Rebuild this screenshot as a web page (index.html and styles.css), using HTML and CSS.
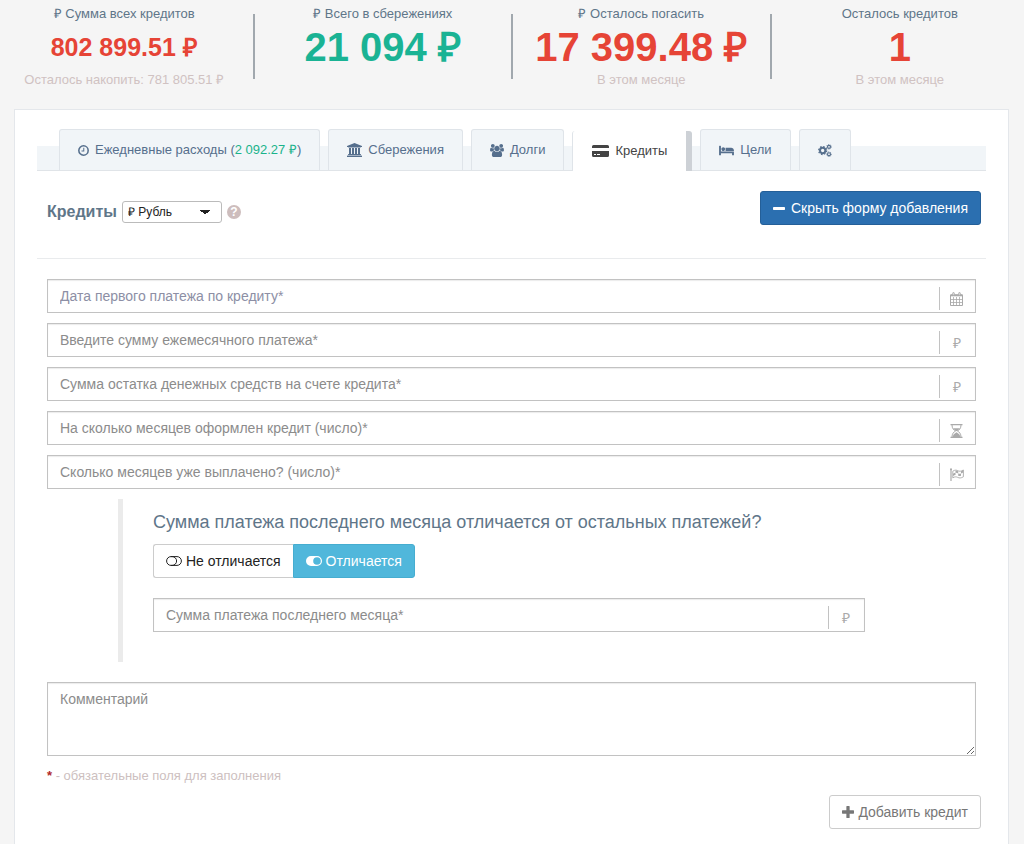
FILE: index.html
```html
<!DOCTYPE html>
<html lang="ru">
<head>
<meta charset="utf-8">
<meta name="viewport" content="width=device-width, initial-scale=1">
<title>Кредиты</title>
<link rel="stylesheet" href="styles.css">
</head>
<body>
<header class="stats">
  <div class="stat">
    <div class="stat-label">₽ Сумма всех кредитов</div>
    <div class="stat-value stat-value-small">802 899.51 ₽</div>
    <div class="stat-note">Осталось накопить: 781 805.51 ₽</div>
  </div>
  <div class="stat">
    <div class="stat-label">₽ Всего в сбережениях</div>
    <div class="stat-value stat-value-good">21 094 ₽</div>
  </div>
  <div class="stat">
    <div class="stat-label">₽ Осталось погасить</div>
    <div class="stat-value">17 399.48 ₽</div>
    <div class="stat-note">В этом месяце</div>
  </div>
  <div class="stat">
    <div class="stat-label">Осталось кредитов</div>
    <div class="stat-value">1</div>
    <div class="stat-note">В этом месяце</div>
  </div>
</header>

<main class="panel">
  <nav class="tabs">
    <a class="tab" href="#daily">
      <svg class="icon" width="11" height="11" viewBox="0 0 12 12" fill="none" stroke="currentColor"><circle cx="6" cy="6" r="5.100" stroke-width="1.700"/><path d="M6.300 3v3.500H3.800" stroke-width="1.100"/></svg>
      <span>Ежедневные расходы (<span class="amount">2 092.27 ₽</span>)</span>
    </a>
    <a class="tab" href="#savings">
      <svg class="icon" width="15" height="14" viewBox="0 0 1920 1792" fill="currentColor"><path d="M960 0l960 384v128h-128q0 26-20.500 45t-48.500 19h-1526q-28 0-48.500-19t-20.500-45h-128v-128zm-704 640h256v768h128v-768h256v768h128v-768h256v768h128v-768h256v768h59q28 0 48.500 19t20.500 45v64h-1664v-64q0-26 20.500-45t48.500-19h59v-768zm1595 960q28 0 48.500 19t20.500 45v128h-1920v-128q0-26 20.500-45t48.500-19h1782z"/></svg>
      <span>Сбережения</span>
    </a>
    <a class="tab" href="#debts">
      <svg class="icon" width="14" height="13" viewBox="0 0 1920 1792" fill="currentColor"><path d="M593 896q-162 5-265 128h-134q-82 0-138-40.500t-56-118.500q0-353 124-353 6 0 43.500 21t97.500 42.500 119 21.500q67 0 133-23-5 37-5 66 0 139 81 256zm1071 637q0 120-73 189.500t-194 69.500h-874q-121 0-194-69.500t-73-189.500q0-53 3.500-103.500t14-109 26.500-108.500 43-97.500 62-81 85.500-53.500 111.500-20q10 0 43 21.500t73 48 107 48 135 21.500 135-21.500 107-48 73-48 43-21.500q61 0 111.500 20t85.500 53.500 62 81 43 97.500 26.500 108.500 14 109 3.500 103.500zm-1024-1277q0 106-75 181t-181 75-181-75-75-181 75-181 181-75 181 75 75 181zm704 384q0 159-112.500 271.500t-271.500 112.500-271.500-112.500-112.500-271.500 112.500-271.500 271.500-112.500 271.500 112.500 112.500 271.500zm576 225q0 78-56 118.500t-138 40.500h-134q-103-123-265-128 81-117 81-256 0-29-5-66 66 23 133 23 59 0 119-21.500t97.500-42.500 43.500-21q124 0 124 353zm-128-609q0 106-75 181t-181 75-181-75-75-181 75-181 181-75 181 75 75 181z"/></svg>
      <span>Долги</span>
    </a>
    <a class="tab tab-active" href="#credits" aria-current="page">
      <svg class="icon" width="17" height="12" viewBox="0 0 17 12" fill="currentColor"><path d="M1.500 0h14Q17 0 17 1.500V3H0V1.500Q0 0 1.500 0zM0 6h17v4.500q0 1.500-1.500 1.500h-14Q0 12 0 10.500zm2 3v1h2V9zm3 0v1h3V9z" fill-rule="evenodd"/></svg>
      <span>Кредиты</span>
    </a>
    <a class="tab" href="#goals">
      <svg class="icon" width="15" height="13" viewBox="0 0 2048 1792" fill="currentColor"><path d="M256 1024h1728q26 0 45 19t19 45v448h-256v-256h-1536v256h-256v-1216q0-26 19-45t45-19h128q26 0 45 19t19 45v704zm576-320q0-106-75-181t-181-75-181 75-75 181 75 181 181 75 181-75 75-181zm1216 256v-64q0-159-112.500-271.500t-271.500-112.500h-704q-26 0-45 19t-19 45v384h1152z"/></svg>
      <span>Цели</span>
    </a>
    <a class="tab" href="#settings" aria-label="⚙">
      <svg class="icon" width="14" height="13" viewBox="0 0 15 14" fill="none" stroke="currentColor"><circle cx="5" cy="7" r="2.900" stroke-width="2.200"/><circle cx="5" cy="7" r="4.300" stroke-width="1.400" stroke-dasharray="1.700 1.677"/><circle cx="11.800" cy="3" r="1.600" stroke-width="1.300"/><circle cx="11.800" cy="3" r="2.500" stroke-width=".9" stroke-dasharray="1 .963"/><circle cx="11.800" cy="11" r="1.600" stroke-width="1.300"/><circle cx="11.800" cy="11" r="2.500" stroke-width=".9" stroke-dasharray="1 .963"/></svg>
    </a>
  </nav>

  <div class="toolbar">
    <div class="toolbar-title">
      <h1 class="title" id="credits">Кредиты</h1>
      <select class="currency" aria-labelledby="credits"><option>₽ Рубль</option></select>
      <button class="help" type="button">?</button>
    </div>
    <button class="button button-primary" type="button">
      <svg class="icon" width="12" height="11" viewBox="0 0 12 11" fill="currentColor"><rect y="4" width="12" height="3" rx=".7"/></svg>
      <span>Скрыть форму добавления</span>
    </button>
  </div>

  <form class="form">
    <div class="field field-date">
      <input class="input" type="text" placeholder="Дата первого платежа по кредиту*" aria-label="Дата первого платежа по кредиту">
      <span class="addon"><svg width="13" height="14" viewBox="0 0 13 14" fill="none" stroke="currentColor"><path d="M.5 3h12v10.500H.5z"/><path d="M.5 3.300h12" stroke-width="2"/><path d="M3.500 5v8M6.500 5v8M9.500 5v8M1 7.500h11M1 10.500h11" stroke-width=".8"/><rect x="2.800" y=".5" width="1.400" height="2.800" rx=".6" fill="#fff"/><rect x="8.800" y=".5" width="1.400" height="2.800" rx=".6" fill="#fff"/></svg></span>
    </div>
    <div class="field">
      <input class="input" type="text" placeholder="Введите сумму ежемесячного платежа*" aria-label="Введите сумму ежемесячного платежа">
      <span class="addon">₽</span>
    </div>
    <div class="field">
      <input class="input" type="text" placeholder="Сумма остатка денежных средств на счете кредита*" aria-label="Сумма остатка денежных средств на счете кредита">
      <span class="addon">₽</span>
    </div>
    <div class="field">
      <input class="input" type="text" placeholder="На сколько месяцев оформлен кредит (число)*" aria-label="На сколько месяцев оформлен кредит (число)">
      <span class="addon"><svg width="13" height="14" viewBox="0 0 13 14" fill="currentColor"><path d="M.5 0h12v1.200H.5zM.5 12.800h12V14H.5z"/><path d="M2 1c0 3.500 1.800 5 3.500 6C3.800 8 2 9.500 2 13M11 1c0 3.500-1.800 5-3.500 6 1.700 1 3.500 2.500 3.500 6" fill="none" stroke="currentColor"/><path d="M3 4.200h7L7.300 7H5.700zM6.500 8.200l3 2.300.9 2.500H2.600l.9-2.500z"/></svg></span>
    </div>
    <div class="field">
      <input class="input" type="text" placeholder="Сколько месяцев уже выплачено? (число)*" aria-label="Сколько месяцев уже выплачено? (число)">
      <span class="addon"><svg width="14" height="13" viewBox="0 0 14 13" fill="none" stroke="currentColor"><path d="M1 1v12" stroke-width="1.200"/><circle cx="1" cy="1.200" r="1" fill="currentColor" stroke="none"/><path d="M2.800 3.200c2-1.500 3.800-1.200 5-.5 1.500.8 3 .8 5.600-.7v6.800c-2.600 1.500-4.100 1.400-5.600.6-1.200-.6-3-1-5 .5z" stroke-width=".9"/><path d="M5.500 2.400c1 0 1.800.3 2.700.8v2.200c-1-.5-1.800-.7-2.700-.6zM3 5.700c1-.6 1.700-.8 2.500-.9V7c-.8.100-1.500.4-2.500 1zM8.200 5.400c1 .4 1.800.4 2.800.1v2.300c-1 .3-1.800.3-2.800-.1zM11 3.200l2.200-.8v2.200l-2.200.9z" fill="currentColor" stroke="none"/></svg></span>
    </div>

    <fieldset class="last-payment">
      <legend class="question">Сумма платежа последнего месяца отличается от остальных платежей?</legend>
      <div class="switch">
        <button class="button switch-off" type="button" aria-pressed="false">
          <svg class="icon" width="16" height="10" viewBox="0 0 16 10" fill="none" stroke="currentColor"><rect x=".6" y=".6" width="14.800" height="8.800" rx="4.400"/><path d="M5 .6h1.200a4.400 4.400 0 0 1 0 8.800H5"/></svg>
          <span>Не отличается</span>
        </button>
        <button class="button switch-on" type="button" aria-pressed="true">
          <svg class="icon" width="16" height="10" viewBox="0 0 16 10" fill="currentColor"><path d="M5 0h6a5 5 0 0 1 0 10H5A5 5 0 0 1 5 0zm6 1.200a3.800 3.800 0 1 0 0 7.600 3.800 3.800 0 0 0 0-7.600z" fill-rule="evenodd"/></svg>
          <span>Отличается</span>
        </button>
      </div>
      <div class="field">
        <input class="input" type="text" placeholder="Сумма платежа последнего месяца*" aria-label="Сумма платежа последнего месяца">
        <span class="addon">₽</span>
      </div>
    </fieldset>

    <textarea class="comment" placeholder="Комментарий" aria-label="Комментарий"></textarea>
    <p class="required-note"><b class="star">*</b> - обязательные поля для заполнения</p>
  </form>

  <div class="actions">
    <button class="button button-add" type="button">
      <svg class="icon" width="12" height="12" viewBox="0 0 11 11" fill="currentColor"><path d="M4 .5Q4 0 4.500 0h2Q7 0 7 .5V4h3.500q.5 0 .5.500v2q0 .5-.5.500H7v3.500q0 .5-.5.500h-2Q4 11 4 10.500V7H.5Q0 7 0 6.500v-2Q0 4 .5 4H4z"/></svg>
      <span>Добавить кредит</span>
    </button>
  </div>
</main>
</body>
</html>
```
FILE: styles.css
```css
* {
  box-sizing: border-box;
}

body {
  margin: 0;
  background: #f5f5f5;
  color: #5f7689;
  font: 14px/20px "Liberation Sans", Arial, sans-serif;
  overflow-x: hidden;
}

button,
input,
select,
textarea {
  font: inherit;
}

.icon {
  flex: none;
}

/* Summary row */
.stats {
  display: grid;
  grid-template-columns: repeat(4, 1fr);
  margin: 0 -5px;
  padding-top: 4px;
}

.stat {
  position: relative;
  height: 105px;
  text-align: center;
  white-space: nowrap;
}

.stat + .stat::before {
  content: "";
  position: absolute;
  left: -1px;
  top: 10px;
  width: 2px;
  height: 65px;
  background: #a1a8ae;
}

.stat-label {
  font-size: 13px;
}

.stat-value {
  height: 46px;
  color: #e64436;
  font-size: 40px;
  font-weight: bold;
  line-height: 46px;
}

.stat-value-small {
  font-size: 25px;
}

.stat-value-good {
  color: #1ab394;
}

.stat-note {
  color: #d0c2c2;
  font-size: 13px;
  line-height: 20px;
}

/* Main panel */
.panel {
  min-height: 735px;
  margin: 0 15px 0 14px;
  padding: 19px 22px 15px;
  border: 1px solid #e4e7eb;
  border-bottom: 0;
  background: #fff;
}

.tabs {
  display: flex;
  gap: 8px;
  height: 42px;
  padding-left: 22px;
  border-bottom: 1px solid #e0e4e8;
  background: linear-gradient(#fff 17px, #f1f5f8 17px);
}

.tab {
  display: flex;
  align-items: center;
  gap: 6px;
  height: 41px;
  padding: 0 18px;
  border: 1px solid #dfe4e9;
  border-bottom: 0;
  border-radius: 3px 3px 0 0;
  background: #f1f5f8;
  color: #566f8d;
  font-size: 13px;
  text-decoration: none;
  white-space: nowrap;
}

.tab-active {
  height: 40px;
  margin-top: 2px;
  padding: 0 19px;
  border-width: 0 6px 0 1px;
  border-right-color: #cdd1d6;
  background: #fff;
  color: #444;
}

.amount {
  color: #1ab38b;
}

/* Title row */
.toolbar {
  display: flex;
  align-items: flex-start;
  justify-content: space-between;
  padding: 20px 5px 33px 10px;
  border-bottom: 1px solid #e9ebed;
}

.toolbar-title {
  display: flex;
  align-items: center;
  gap: 5px;
  padding-top: 9px;
}

.title {
  margin: 0;
  font-size: 16px;
  line-height: 24px;
}

.currency {
  appearance: none;
  width: 100px;
  height: 22px;
  padding: 0 5px;
  border: 1px solid #bbb;
  border-radius: 3px;
  background: #fff;
  background-image: linear-gradient(to bottom left, #222 50%, transparent 50%), linear-gradient(to bottom right, #222 50%, transparent 50%);
  background-position: 77px 8px, 82px 8px;
  background-repeat: no-repeat;
  background-size: 5px 5px;
  color: #222;
  font-size: 12px;
}

.help {
  width: 14px;
  height: 14px;
  padding: 0;
  border: 0;
  border-radius: 50%;
  background: #cdbdbd;
  color: #fff;
  font-size: 12px;
  font-weight: bold;
  line-height: 14px;
}

.button {
  display: flex;
  align-items: center;
  gap: 4px;
  height: 34px;
  padding: 0 12px;
  border: 1px solid #ccc;
  border-radius: 3px;
  background: #fff;
  white-space: nowrap;
}

.button-primary {
  gap: 6px;
  border-color: #245f98;
  background: #2b6fb0;
  color: #fff;
}

/* Form */
.form {
  display: flex;
  flex-direction: column;
  gap: 10px;
  padding: 20px 10px 0;
}

.field {
  display: flex;
  height: 34px;
  border: 1px solid #c2c2c2;
  background: #fff;
  box-shadow: inset 0 1px 1px #ebebeb;
}

.input {
  flex: 1;
  min-width: 0;
  padding: 0 12px;
  border: 0;
  background: transparent;
}

.input::placeholder,
.comment::placeholder {
  color: #8c8c8c;
  opacity: 1;
}

.field-date .input::placeholder {
  color: #8d8fa5;
}

.addon {
  display: flex;
  align-items: center;
  justify-content: center;
  width: 36px;
  height: 23px;
  margin-top: 7px;
  padding-right: 2px;
  border-left: 1px solid #c2c2c2;
  color: #aaa;
  font-size: 14px;
}

.last-payment {
  min-width: 0;
  margin: 0 111px 10px 71px;
  padding: 10px 0 30px 30px;
  border: 0;
  border-left: 5px solid #ebebeb;
}

.question {
  float: left;
  width: 100%;
  margin-bottom: 8px;
  padding: 0;
  font-size: 18px;
  line-height: 27px;
}

.switch {
  display: flex;
  clear: both;
  margin-bottom: 20px;
}

.switch-off {
  border-right: 0;
  border-radius: 3px 0 0 3px;
  color: #222;
}

.switch-on {
  border-color: #46add0;
  border-radius: 0 3px 3px 0;
  background: #50b7db;
  color: #fff;
}

.comment {
  display: block;
  width: 100%;
  height: 74px;
  padding: 6px 12px;
  border: 1px solid #c2c2c2;
  background: #fff;
  box-shadow: inset 0 1px 1px #ebebeb;
  resize: vertical;
}

.required-note {
  margin: 0;
  color: #cdbfbf;
  font-size: 13px;
}

.star {
  color: #b02a2a;
}

.actions {
  display: flex;
  justify-content: flex-end;
  padding: 9px 5px 0;
}

.button-add {
  color: #777;
}
```
